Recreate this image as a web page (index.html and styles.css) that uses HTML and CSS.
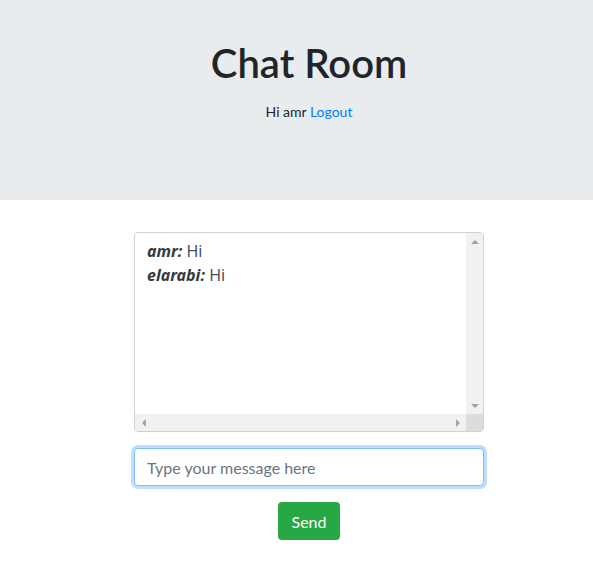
FILE: index.html
```
<!DOCTYPE html>
<html lang="en">
<head>
  <meta charset="UTF-8" />
  <title>Chat Room</title>
  <link rel="stylesheet" href="styles.css">
</head>
<body>

  <div class="jumbotron">
    <h1>Chat Room</h1>
    <p class="greeting">Hi amr <a href="#">Logout</a></p>
  </div>

  <div class="chat">
    <!-- caixa de mensagens com barras de rolagem -->
    <div class="messages">
      <div class="messages-list">
        <div><b><i>amr:</i></b> Hi</div>
        <div><b><i>elarabi:</i></b> Hi</div>
      </div>
      <div class="scroll-v">
        <span class="arrow arrow-up"></span>
        <span class="arrow arrow-down"></span>
      </div>
      <div class="scroll-h">
        <span class="arrow arrow-left"></span>
        <span class="arrow arrow-right"></span>
      </div>
      <div class="scroll-corner"></div>
    </div>

    <input type="text" class="message-input" placeholder="Type your message here" />

    <div class="actions">
      <button>Send</button>
    </div>
  </div>

</body>
</html>
```

FILE: styles.css
```
body {
  font-family: Lato, 'Noto Sans', sans-serif;
  color: #212529;
  margin: 0;
  background-color: #fff;
}

.jumbotron {
  background-color: #e9ecef;
  height: 200px;
  box-sizing: border-box;
  padding: 39px 0 0 25px;
  text-align: center;
}

h1 {
  font-size: 40px;
  font-weight: 600;
  line-height: 48px;
  margin: 0;
}

.greeting {
  font-size: 14px;
  line-height: 21px;
  margin: 14px 0 0;
}

.greeting a {
  color: #007bff;
  text-decoration: none;
}

.chat {
  width: 350px;
  margin: 32px 0 0 134px;
}

.messages {
  height: 200px;
  box-sizing: border-box;
  border: 1px solid #d2d2d2;
  border-radius: 4px;
  overflow: hidden;
  display: grid;
  grid-template-columns: 1fr 17px;
  grid-template-rows: 1fr 17px;
  font-size: 16px;
  line-height: 24px;
  color: #495057;
}

.messages-list {
  font-family: 'Noto Sans', sans-serif;
  padding: 6px 12px;
}

.messages b {
  color: #343a40;
}

.scroll-v,
.scroll-h {
  background-color: #f1f1f1;
  display: flex;
  justify-content: space-between;
}

.scroll-v {
  flex-direction: column;
}

.scroll-corner {
  background-color: #dcdcdc;
}

.arrow {
  width: 17px;
  height: 17px;
  display: flex;
  align-items: center;
  justify-content: center;
}

.arrow::before {
  content: "";
  width: 0;
  height: 0;
  border: 4px solid transparent;
}

.arrow-up::before { border-bottom-color: #a3a3a3; border-top-width: 0; }
.arrow-down::before { border-top-color: #a3a3a3; border-bottom-width: 0; }
.arrow-left::before { border-right-color: #a3a3a3; border-left-width: 0; }
.arrow-right::before { border-left-color: #a3a3a3; border-right-width: 0; }

.message-input {
  display: block;
  width: 100%;
  box-sizing: border-box;
  height: 38px;
  margin-top: 16px;
  padding: 6px 12px;
  font-family: inherit;
  font-size: 16px;
  color: #495057;
  border: 1px solid #80bdff;
  border-radius: 4px;
  box-shadow: 0 0 0 3px rgba(0, 123, 255, 0.25);
  outline: none;
}

.message-input::placeholder {
  color: #6c757d;
}

.actions {
  text-align: center;
  margin-top: 16px;
}

button {
  height: 38px;
  padding: 0 14px;
  background-color: #28a745;
  border: none;
  border-radius: 4px;
  color: white;
  font-family: inherit;
  font-size: 16px;
  cursor: pointer;
}
```
